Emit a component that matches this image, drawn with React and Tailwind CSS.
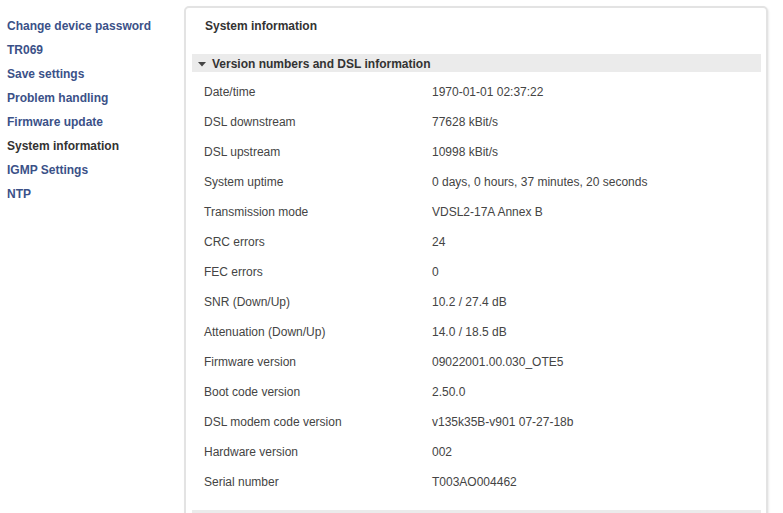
const links = [
  { label: "Change device password" },
  { label: "TR069" },
  { label: "Save settings" },
  { label: "Problem handling" },
  { label: "Firmware update" },
  { label: "System information", active: true },
  { label: "IGMP Settings" },
  { label: "NTP" },
];

const rows = [
  ["Date/time", "1970-01-01 02:37:22"],
  ["DSL downstream", "77628 kBit/s"],
  ["DSL upstream", "10998 kBit/s"],
  ["System uptime", "0 days, 0 hours, 37 minutes, 20 seconds"],
  ["Transmission mode", "VDSL2-17A Annex B"],
  ["CRC errors", "24"],
  ["FEC errors", "0"],
  ["SNR (Down/Up)", "10.2 / 27.4 dB"],
  ["Attenuation (Down/Up)", "14.0 / 18.5 dB"],
  ["Firmware version", "09022001.00.030_OTE5"],
  ["Boot code version", "2.50.0"],
  ["DSL modem code version", "v135k35B-v901 07-27-18b"],
  ["Hardware version", "002"],
  ["Serial number", "T003AO004462"],
];

export default function App() {
  return (
    <div
      className="flex h-[513px] w-[783px] overflow-hidden bg-white text-[12px]"
      style={{ fontFamily: '"Liberation Sans", Arial, sans-serif' }}
    >
      {/* side menu */}
      <div className="flex w-[184px] shrink-0 flex-col pl-[7px] pt-[19px]">
        {links.map((l) => (
          <div
            key={l.label}
            className={
              "h-[24px] font-bold leading-[14px] " +
              (l.active ? "text-[#333333]" : "text-[#3b5188]")
            }
          >
            {l.label}
          </div>
        ))}
      </div>

      {/* main panel */}
      <div className="mt-[6px] w-[584px] shrink-0 self-start rounded-[5px] border-2 border-[#e3e3e3] pb-[20px] pl-[6px] pr-[5px] shadow-[1px_1px_2px_rgba(0,0,0,0.08)]">
        <div className="pl-[13px] pt-[11px] font-bold leading-[14px] text-[#333333]">
          System information
        </div>

        <div className="mt-[21px] flex h-[18px] items-center bg-[#ebebeb] pl-[6px] pt-[1px] font-bold text-[#333333]">
          <svg width="8" height="5" viewBox="0 0 8 5" className="mr-[6px] mt-[1px]">
            <path d="M0 0 L8 0 L4 4.5 Z" fill="#444" />
          </svg>
          Version numbers and DSL information
        </div>

        <div className="mt-[5px]">
          {rows.map(([k, v]) => (
            <div key={k} className="flex h-[30px] items-center pl-[12px] text-[#444444]">
              <div className="w-[228px] shrink-0">{k}</div>
              <div>{v}</div>
            </div>
          ))}
        </div>

        <div className="mt-[13px] h-[18px] bg-[#ebebeb]" />
      </div>
    </div>
  );
}
